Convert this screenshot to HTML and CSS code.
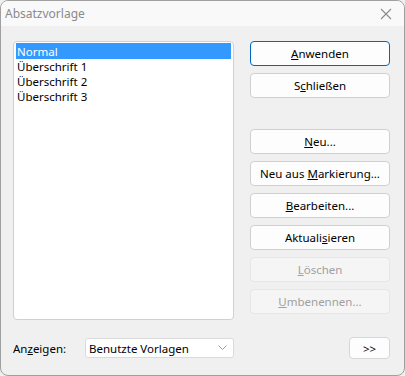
FILE: index.html
```html
<!DOCTYPE html>
<html lang="de">
  <head>
    <meta charset="UTF-8" />
    <title>Absatzvorlage</title>
    <link rel="stylesheet" href="styles.css">
  </head>
  <body>
    <div class="window">
      <div class="titlebar">
        <span class="title">Absatzvorlage</span>
        <svg class="close" width="12" height="12" viewBox="0 0 12 12">
          <path d="M1 1 L11 11 M11 1 L1 11" stroke="#8a8a8a" stroke-width="1.1" fill="none" />
        </svg>
      </div>

      <div class="content">
        <div class="main">
          <div class="list">
            <div class="item selected">Normal</div>
            <div class="item">Überschrift 1</div>
            <div class="item">Überschrift 2</div>
            <div class="item">Überschrift 3</div>
          </div>

          <div class="buttons">
            <button class="btn default"><u>A</u>nwenden</button>
            <button class="btn">S<u>c</u>hließen</button>
            <button class="btn spaced"><u>N</u>eu...</button>
            <button class="btn">Neu aus <u>M</u>arkierung...</button>
            <button class="btn"><u>B</u>earbeiten...</button>
            <button class="btn">Aktuali<u>s</u>ieren</button>
            <button class="btn" disabled><u>L</u>öschen</button>
            <button class="btn" disabled><u>U</u>mbenennen...</button>
          </div>
        </div>

        <div class="footer">
          <span class="label">An<u>z</u>eigen:</span>
          <div class="select">
            <span>Benutzte Vorlagen</span>
            <svg width="9" height="6" viewBox="0 0 9 6">
              <path d="M0.5 0.5 L4.5 4.5 L8.5 0.5" stroke="#9a9a9a" stroke-width="1" fill="none" />
            </svg>
          </div>
          <button class="btn more">&gt;&gt;</button>
        </div>
      </div>
    </div>
  </body>
</html>
```

FILE: styles.css
```css
body {
  margin: 0;
  padding: 0;
  font-family: "Noto Sans", "Open Sans", sans-serif;
  font-size: 11.5px;
  color: #000;
  background: #f0f0f0;
}

.window {
  width: 405px;
  height: 376px;
  box-sizing: border-box;
  border: 1px solid #a0a0a0;
  border-radius: 8px;
  overflow: hidden;
  background: #f0f0f0;
  display: flex;
  flex-direction: column;
}

.titlebar {
  height: 25px;
  background: #f9f9f9;
  display: flex;
  align-items: center;
  justify-content: space-between;
  padding: 0 10px 0 4px;
  flex-shrink: 0;
}

.title {
  color: #8a8a8a;
  font-size: 12px;
}

.close {
  margin-right: 2px;
}

.content {
  flex: 1;
  padding: 15px 14px 0 12px;
}

.main {
  display: flex;
  gap: 16px;
}

.list {
  width: 221px;
  height: 279px;
  box-sizing: border-box;
  background: #fff;
  border: 1px solid #d0d0d0;
  border-radius: 4px;
  padding: 1px 2px;
}

.item {
  height: 15px;
  line-height: 15px;
  padding-left: 1px;
  white-space: nowrap;
}

.item.selected {
  background: #3399ff;
  color: #fff;
  border-top: 1px dotted #c8762c;
  height: 15px;
}

.buttons {
  display: flex;
  flex-direction: column;
  gap: 7px;
  width: 140px;
}

.btn {
  height: 25px;
  box-sizing: border-box;
  background: #fdfdfd;
  border: 1px solid #d0d0d0;
  border-radius: 4px;
  font-family: inherit;
  font-size: 11.5px;
  color: #000;
  padding: 0;
}

.btn.default {
  border-color: #0067c0;
}

.btn.spaced {
  margin-top: 24px;
}

.btn:disabled {
  background: #f5f5f5;
  border-color: #e6e6e6;
  color: #a0a0a0;
}

.footer {
  display: flex;
  align-items: center;
  height: 22px;
  margin-top: 17px;
}

.label {
  width: 72px;
}

.select {
  width: 149px;
  height: 20px;
  box-sizing: border-box;
  background: #fff;
  border: 1px solid #dadada;
  border-radius: 3px;
  display: flex;
  align-items: center;
  justify-content: space-between;
  padding: 0 6px 0 3px;
}

.btn.more {
  width: 41px;
  height: 22px;
  margin-left: auto;
  border-color: #d6d6d6;
}
```
